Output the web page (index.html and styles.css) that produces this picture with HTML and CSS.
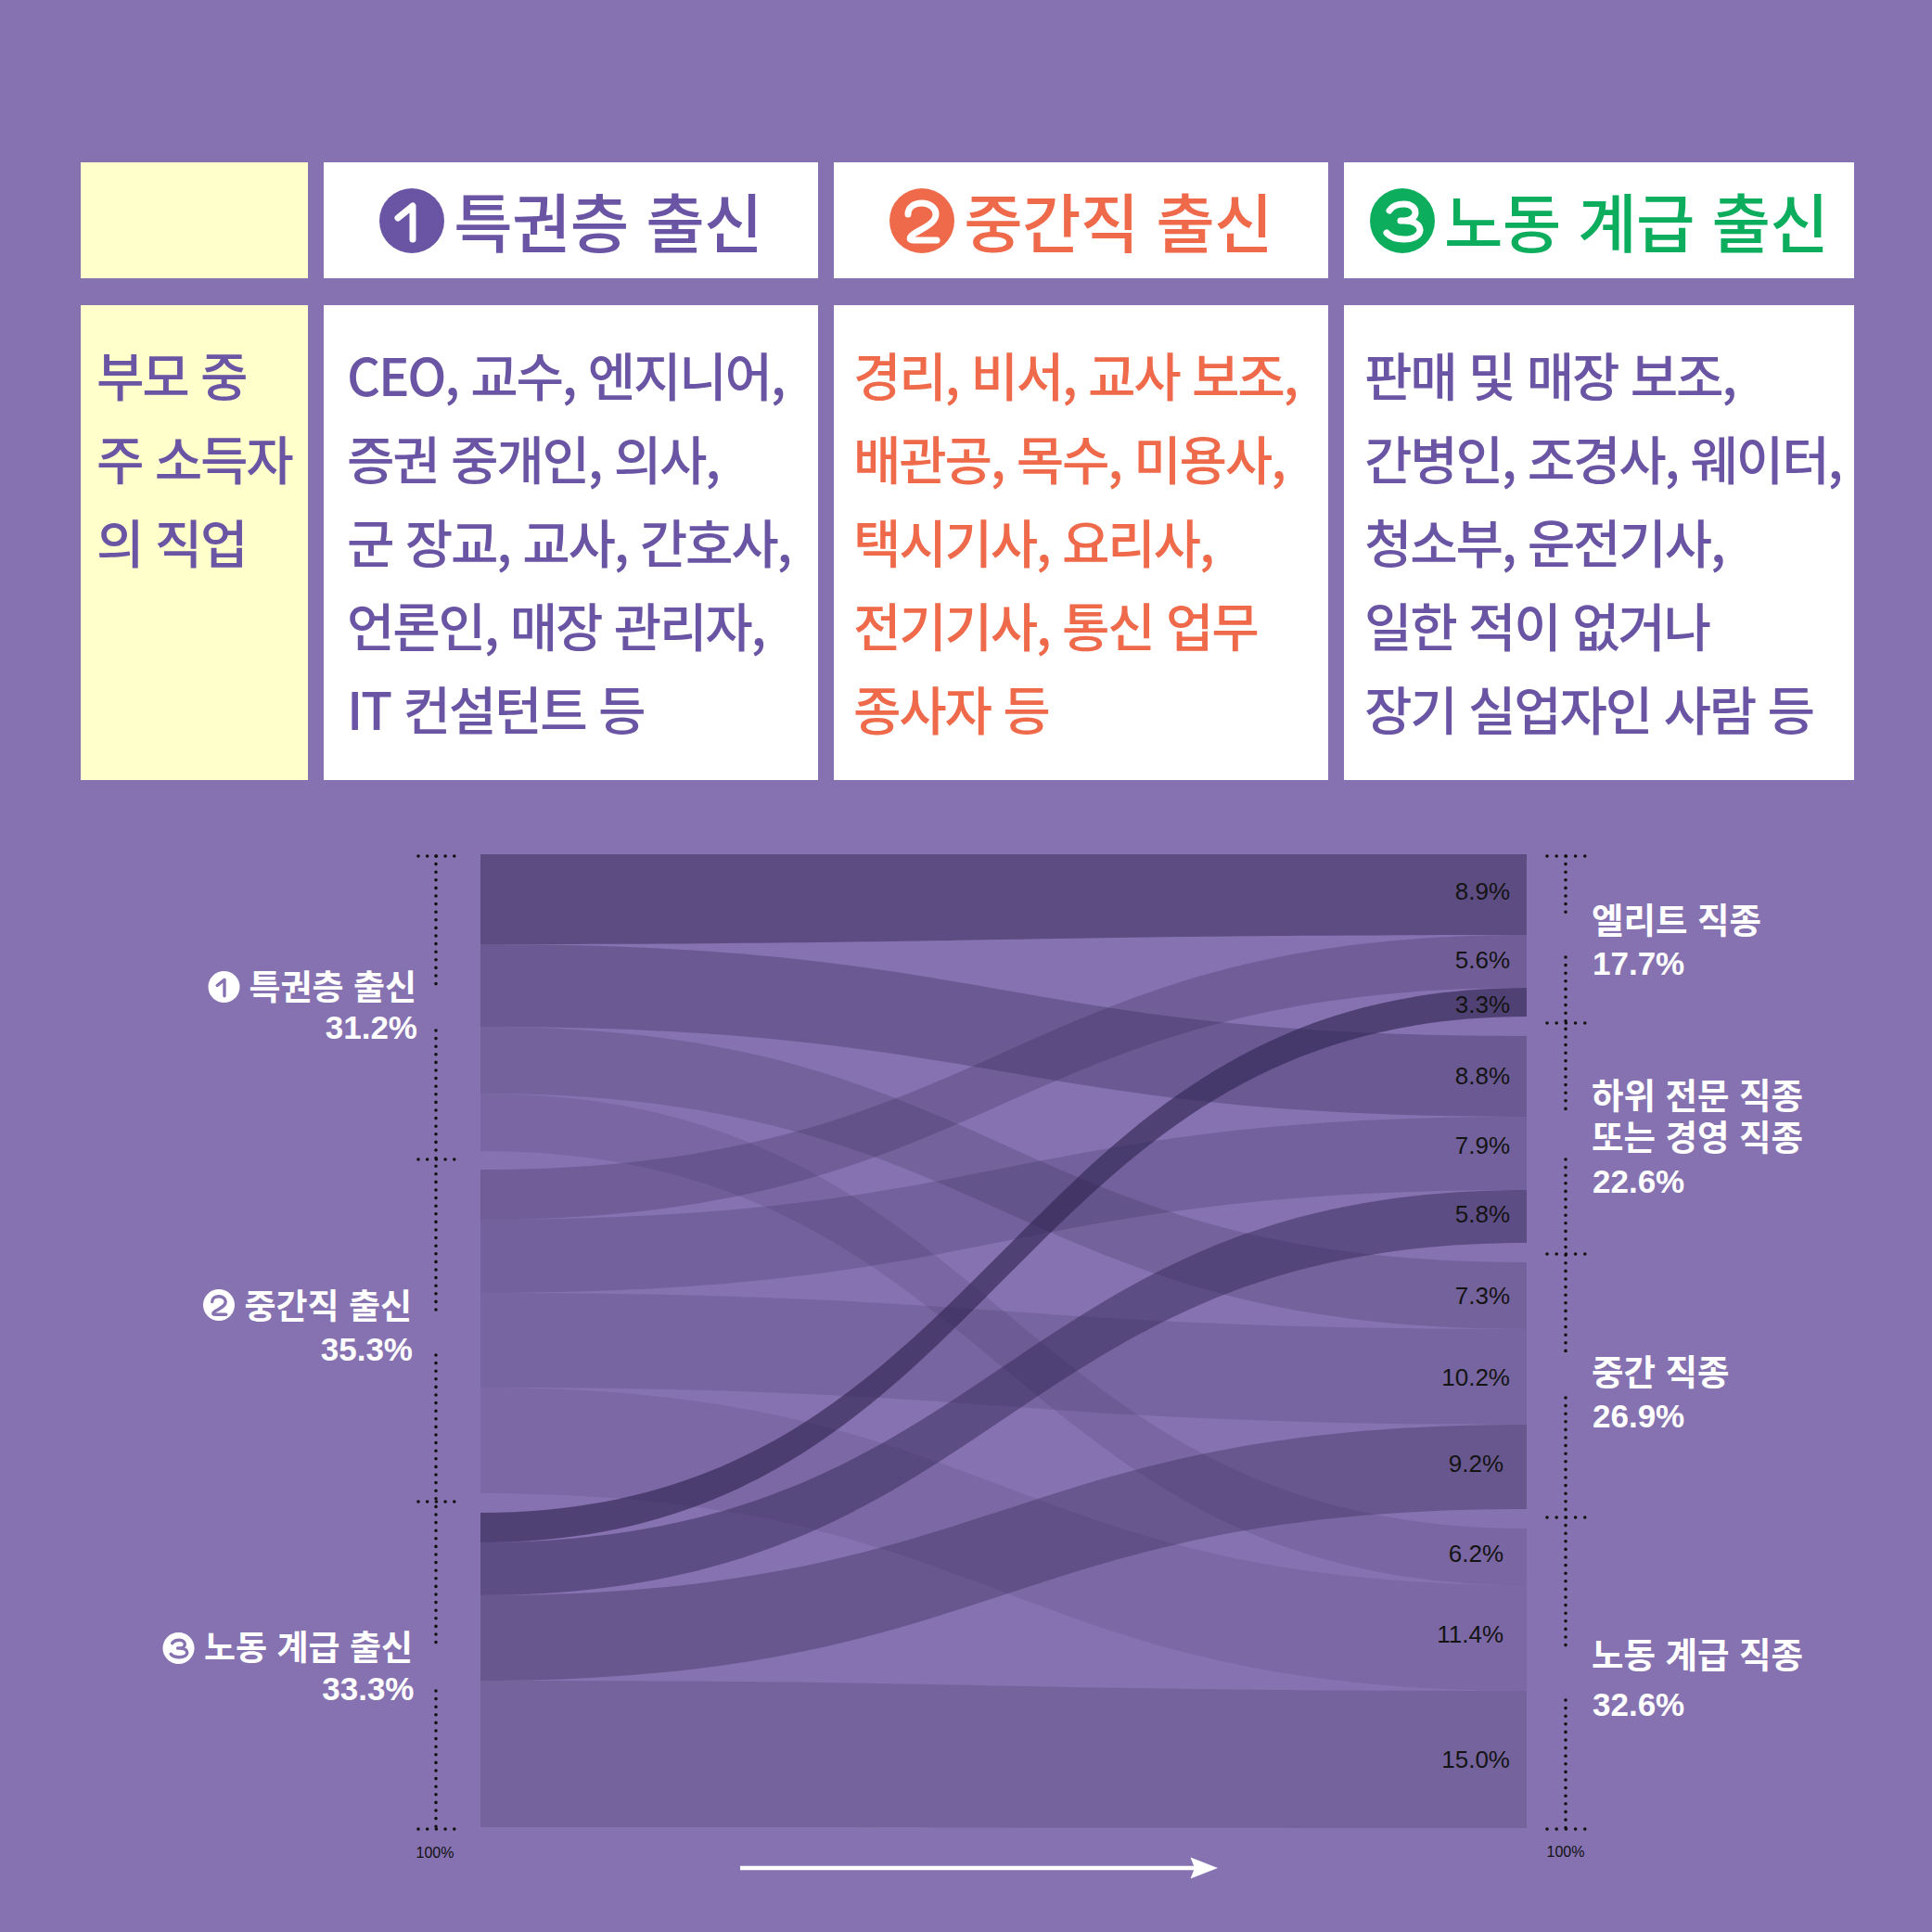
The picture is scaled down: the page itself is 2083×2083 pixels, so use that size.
FILE: index.html
```html
<!DOCTYPE html>
<html lang="ko">
<head>
<meta charset="utf-8">
<title>부모 직업과 자녀 직종</title>
<link rel="stylesheet" href="styles.css">
</head>
<body>
<svg class="defs" width="0" height="0" aria-hidden="true">
  <defs>
    <symbol id="n1" viewBox="0 0 70 70">
      <path d="M20 32 L36 19 V55" fill="none" stroke="currentColor" stroke-width="7" stroke-linecap="round" stroke-linejoin="round"/>
    </symbol>
    <symbol id="n2" viewBox="0 0 70 70">
      <path d="M20 28 C20 20 27 16 35 16 C43 16 50 21 50 28 C50 37 38 42 28 48 C20 53 21 56 26 56 L51 56" fill="none" stroke="currentColor" stroke-width="7" stroke-linecap="round" stroke-linejoin="round"/>
    </symbol>
    <symbol id="n3" viewBox="0 0 70 70">
      <path d="M21 24 C24 19 30 17 37 17 C44 17 49 21 49 26 C49 31 44 35 37 35 L33 35 M37 35 C47 35 54 39 54 45 C54 51 47 55 37 55 C29 55 22 53 18 48" fill="none" stroke="currentColor" stroke-width="7" stroke-linecap="round" stroke-linejoin="round"/>
    </symbol>
  </defs>
</svg>
<main class="page">
  <section class="grid">
    <div class="cell key"></div>
    <div class="cell head t-purple">
      <svg class="badge" viewBox="0 0 70 70"><circle cx="35" cy="35" r="35" class="f-purple"/><use href="#n1" width="70" height="70" class="num"/></svg>
      <span>특권층 출신</span>
    </div>
    <div class="cell head t-orange">
      <svg class="badge" viewBox="0 0 70 70"><circle cx="35" cy="35" r="35" class="f-orange"/><use href="#n2" width="70" height="70" class="num"/></svg>
      <span>중간직 출신</span>
    </div>
    <div class="cell head t-green">
      <svg class="badge" viewBox="0 0 70 70"><circle cx="35" cy="35" r="35" class="f-green"/><use href="#n3" width="70" height="70" class="num"/></svg>
      <span>노동 계급 출신</span>
    </div>

    <div class="cell key body pad-k t-purple">부모 중<br>주 소득자<br>의 직업</div>
    <div class="cell body pad-1 t-purple">CEO, 교수, 엔지니어,<br>증권 중개인, 의사,<br>군 장교, 교사, 간호사,<br>언론인, 매장 관리자,<br>IT 컨설턴트 등</div>
    <div class="cell body pad-2 t-orange">경리, 비서, 교사 보조,<br>배관공, 목수, 미용사,<br>택시기사, 요리사,<br>전기기사, 통신 업무<br>종사자 등</div>
    <div class="cell body pad-3 t-purple">판매 및 매장 보조,<br>간병인, 조경사, 웨이터,<br>청소부, 운전기사,<br>일한 적이 없거나<br>장기 실업자인 사람 등</div>
  </section>

  <svg class="chart" width="2083" height="1223" viewBox="0 860 2083 1223">
    <g class="flows" fill="#2e2350">
      <path fill-opacity="0.12" d="M518 1496 C1082 1496 1082 1709 1646 1709 L1646 1823 C1082 1823 1082 1610 518 1610 Z"/>
      <path fill-opacity="0.14" d="M518 1179 C1082 1179 1082 1648 1646 1648 L1646 1709 C1082 1709 1082 1241 518 1241 Z"/>
      <path fill-opacity="0.16" d="M518 1394 C1082 1394 1082 1433 1646 1433 L1646 1536 C1082 1536 1082 1496 518 1496 Z"/>
      <path fill-opacity="0.19" d="M518 1812 C1082 1812 1082 1823 1646 1823 L1646 1971 C1082 1971 1082 1970 518 1970 Z"/>
      <path fill-opacity="0.20" d="M518 1107 C1082 1107 1082 1361 1646 1361 L1646 1433 C1082 1433 1082 1179 518 1179 Z"/>
      <path fill-opacity="0.22" d="M518 1315 C1082 1315 1082 1204 1646 1204 L1646 1283 C1082 1283 1082 1394 518 1394 Z"/>
      <path fill-opacity="0.24" d="M518 1261 C1082 1261 1082 1008 1646 1008 L1646 1065 C1082 1065 1082 1315 518 1315 Z"/>
      <path fill-opacity="0.31" d="M518 1018 C1082 1018 1082 1117 1646 1117 L1646 1204 C1082 1204 1082 1107 518 1107 Z"/>
      <path fill-opacity="0.34" d="M518 1720 C1082 1720 1082 1536 1646 1536 L1646 1627 C1082 1627 1082 1812 518 1812 Z"/>
      <path fill-opacity="0.48" d="M518 921 C1082 921 1082 921 1646 921 L1646 1008 C1082 1008 1082 1018 518 1018 Z"/>
      <path fill-opacity="0.46" d="M518 1663 C1082 1663 1082 1283 1646 1283 L1646 1340 C1082 1340 1082 1720 518 1720 Z"/>
      <path fill-opacity="0.62" d="M518 1631 C1082 1631 1082 1065 1646 1065 L1646 1096 C1082 1096 1082 1663 518 1663 Z"/>
    </g>

    <g class="vals">
      <text x="1628" y="970">8.9%</text>
      <text x="1628" y="1044">5.6%</text>
      <text x="1628" y="1092">3.3%</text>
      <text x="1628" y="1169">8.8%</text>
      <text x="1628" y="1244">7.9%</text>
      <text x="1628" y="1318">5.8%</text>
      <text x="1628" y="1406">7.3%</text>
      <text x="1628" y="1494">10.2%</text>
      <text x="1621" y="1587">9.2%</text>
      <text x="1621" y="1684">6.2%</text>
      <text x="1621" y="1771">11.4%</text>
      <text x="1628" y="1906">15.0%</text>
    </g>

    <g class="axis">
      <line x1="470" y1="923" x2="470" y2="1061"/>
      <line x1="470" y1="1111" x2="470" y2="1412"/>
      <line x1="470" y1="1461" x2="470" y2="1773"/>
      <line x1="470" y1="1823" x2="470" y2="1972"/>
      <line class="tick" x1="451" y1="923" x2="490" y2="923"/>
      <line class="tick" x1="451" y1="1250" x2="490" y2="1250"/>
      <line class="tick" x1="451" y1="1619" x2="490" y2="1619"/>
      <line class="tick" x1="451" y1="1972" x2="490" y2="1972"/>

      <line x1="1688" y1="923" x2="1688" y2="985"/>
      <line x1="1688" y1="1032" x2="1688" y2="1198"/>
      <line x1="1688" y1="1250" x2="1688" y2="1464"/>
      <line x1="1688" y1="1507" x2="1688" y2="1782"/>
      <line x1="1688" y1="1833" x2="1688" y2="1972"/>
      <line class="tick r" x1="1668" y1="923" x2="1709" y2="923"/>
      <line class="tick r" x1="1668" y1="1103" x2="1709" y2="1103"/>
      <line class="tick r" x1="1668" y1="1352" x2="1709" y2="1352"/>
      <line class="tick r" x1="1668" y1="1636" x2="1709" y2="1636"/>
      <line class="tick r" x1="1668" y1="1972" x2="1709" y2="1972"/>
    </g>
    <text class="tot" x="469" y="2003">100%</text>
    <text class="tot" x="1688" y="2002">100%</text>

    <g class="left">
      <circle cx="241.5" cy="1064" r="17" fill="#fff"/>
      <use href="#n1" x="224.5" y="1047" width="34" height="34" class="cut"/>
      <text class="lbl" x="449" y="1078">특권층 출신</text>
      <text class="pct" x="450" y="1120">31.2%</text>

      <circle cx="236" cy="1407" r="17" fill="#fff"/>
      <use href="#n2" x="219" y="1390" width="34" height="34" class="cut"/>
      <text class="lbl" x="444" y="1422">중간직 출신</text>
      <text class="pct" x="445" y="1467">35.3%</text>

      <circle cx="192.5" cy="1777" r="17" fill="#fff"/>
      <use href="#n3" x="175.5" y="1760" width="34" height="34" class="cut"/>
      <text class="lbl" x="445" y="1790">노동 계급 출신</text>
      <text class="pct" x="446.5" y="1833">33.3%</text>
    </g>

    <g class="right">
      <text class="lbl r" x="1716" y="1006">엘리트 직종</text>
      <text class="pct" x="1717" y="1051">17.7%</text>
      <foreignObject x="1716" y="1156" width="300" height="92">
        <div class="fo-lbl">하위 전문 직종 또는 경영 직종</div>
      </foreignObject>
      <text class="pct" x="1717" y="1286">22.6%</text>
      <text class="lbl r" x="1716" y="1493">중간 직종</text>
      <text class="pct" x="1717" y="1539">26.9%</text>
      <text class="lbl r" x="1716" y="1798">노동 계급 직종</text>
      <text class="pct" x="1717" y="1850">32.6%</text>
    </g>

    <g class="arrow">
      <line x1="798" y1="2014" x2="1292" y2="2014"/>
      <polygon points="1313,2014 1283.5,2002.5 1288,2014 1283.5,2025.5"/>
    </g>
  </svg>
</main>
</body>
</html>
```

FILE: styles.css
```css
html, body {
  margin: 0;
  padding: 0;
  background: #8672b1;
}
body {
  width: 2083px;
  height: 2083px;
  overflow: hidden;
  font-family: "Noto Sans CJK KR", "Noto Sans", sans-serif;
}
.defs {
  position: absolute;
  width: 0;
  height: 0;
  overflow: hidden;
}
.page {
  padding-top: 175px;
}
.grid {
  display: grid;
  grid-template-columns: 245px 533px 533px 550px;
  grid-template-rows: 125px 512px;
  column-gap: 17px;
  row-gap: 29px;
  margin-left: 87px;
}
.cell {
  background: #ffffff;
  box-sizing: border-box;
}
.key {
  background: #ffffcc;
}
.head {
  display: flex;
  align-items: center;
  justify-content: center;
  gap: 10px;
  font-size: 69px;
  font-weight: 500;
  line-height: 1;
  letter-spacing: -0.01em;
}
.badge {
  width: 70px;
  height: 70px;
  flex: none;
}
.num {
  color: #ffffff;
}
.f-purple { fill: #6a55a4; }
.f-orange { fill: #ee6a4b; }
.f-green { fill: #0dad5e; }
.t-purple { color: #6a55a4; }
.t-orange { color: #ee6a4b; }
.t-green { color: #0dad5e; }
.body {
  font-size: 56px;
  font-weight: 500;
  line-height: 90px;
  letter-spacing: -0.04em;
  white-space: nowrap;
  padding-top: 29px;
}
.pad-k { padding-left: 17px; }
.pad-1 { padding-left: 25px; }
.pad-2 { padding-left: 21px; }
.pad-3 { padding-left: 22px; }

.chart {
  display: block;
  margin-top: 19px;
}
.vals text {
  font-family: "Liberation Sans", Arial, sans-serif;
  font-size: 26px;
  fill: #141414;
  text-anchor: end;
}
.axis line {
  stroke: #111;
  stroke-width: 3.6;
  stroke-linecap: round;
  stroke-dasharray: 0 8.6;
}
.axis line.tick {
  stroke-dasharray: 0 9.7;
}
.axis line.tick.r {
  stroke-dasharray: 0 10.2;
}
.tot {
  font-family: "Liberation Sans", Arial, sans-serif;
  font-size: 16px;
  fill: #111;
  text-anchor: middle;
}
.lbl {
  font-family: "Noto Sans CJK KR", "Noto Sans", sans-serif;
  font-weight: 700;
  font-size: 37px;
  fill: #ffffff;
}
.lbl.r {
  font-size: 37.5px;
}
.fo-lbl {
  width: 250px;
  margin: 0;
  font-family: "Noto Sans CJK KR", "Noto Sans", sans-serif;
  font-weight: 700;
  font-size: 37.5px;
  line-height: 45px;
  color: #ffffff;
}
.pct {
  font-family: "Liberation Sans", Arial, sans-serif;
  font-weight: 700;
  font-size: 35px;
  fill: #ffffff;
}
.left text {
  text-anchor: end;
}
.cut {
  color: #8672b1;
}
.arrow line {
  stroke: #ffffff;
  stroke-width: 4.4;
}
.arrow polygon {
  fill: #ffffff;
}
```
